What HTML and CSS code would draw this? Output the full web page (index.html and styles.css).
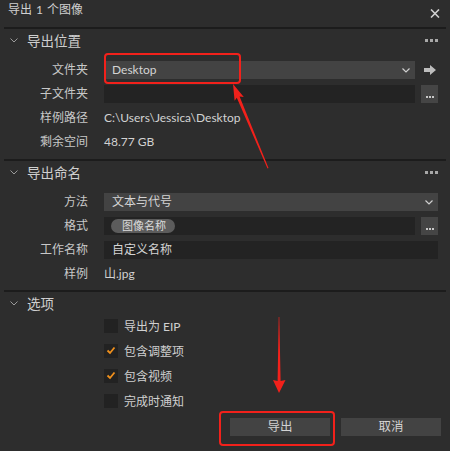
FILE: index.html
```html
<!DOCTYPE html>
<html lang="zh">
<head>
<meta charset="utf-8">
<title>导出 1 个图像</title>
<link rel="stylesheet" href="styles.css">
</head>
<body>
<div class="dialog">
  <div class="titlebar">
    <span class="title">导出 1 个图像</span>
    <svg class="close" width="10" height="9" viewBox="0 0 10 9"><path d="M1 0.5 L9 8.5 M9 0.5 L1 8.5" stroke="#cfcfcf" stroke-width="1.6" fill="none"/></svg>
  </div>
  <div class="sep"></div>

  <section class="section s1">
    <div class="sec-head">
      <svg class="chev" width="8" height="5" viewBox="0 0 8 5"><path d="M0.5 0.5 L4 4 L7.5 0.5" stroke="#9a9a9a" stroke-width="1" fill="none"/></svg>
      <span class="sec-title">导出位置</span>
      <span class="more"><i></i><i></i><i></i></span>
    </div>
    <div class="rows">
      <div class="row">
        <span class="label">文件夹</span>
        <div class="field select">Desktop<svg class="dd" width="8" height="5" viewBox="0 0 8 5"><path d="M0.5 0.5 L4 4 L7.5 0.5" stroke="#cfcfcf" stroke-width="1.2" fill="none"/></svg></div>
        <div class="side">
          <svg width="12" height="10" viewBox="0 0 12 10"><path d="M0 3 H6 V0 L12 5 L6 10 V7 H0 Z" fill="#bdbdbd"/></svg>
        </div>
      </div>
      <div class="row">
        <span class="label">子文件夹</span>
        <div class="field input"></div>
        <div class="side btn"><span class="dots"><i></i><i></i><i></i></span></div>
      </div>
      <div class="row">
        <span class="label">样例路径</span>
        <span class="value">C:\Users\Jessica\Desktop</span>
      </div>
      <div class="row">
        <span class="label">剩余空间</span>
        <span class="value">48.77 GB</span>
      </div>
    </div>
  </section>
  <div class="sep"></div>

  <section class="section s2">
    <div class="sec-head">
      <svg class="chev" width="8" height="5" viewBox="0 0 8 5"><path d="M0.5 0.5 L4 4 L7.5 0.5" stroke="#9a9a9a" stroke-width="1" fill="none"/></svg>
      <span class="sec-title">导出命名</span>
      <span class="more"><i></i><i></i><i></i></span>
    </div>
    <div class="rows">
      <div class="row">
        <span class="label">方法</span>
        <div class="field select">文本与代号<svg class="dd" width="8" height="5" viewBox="0 0 8 5"><path d="M0.5 0.5 L4 4 L7.5 0.5" stroke="#cfcfcf" stroke-width="1.2" fill="none"/></svg></div>
      </div>
      <div class="row">
        <span class="label">格式</span>
        <div class="field input pilled"><span class="pill">图像名称</span></div>
        <div class="side btn"><span class="dots"><i></i><i></i><i></i></span></div>
      </div>
      <div class="row">
        <span class="label">工作名称</span>
        <div class="field input">自定义名称</div>
      </div>
      <div class="row">
        <span class="label">样例</span>
        <span class="value">山.jpg</span>
      </div>
    </div>
  </section>
  <div class="sep"></div>

  <section class="section s3">
    <div class="sec-head">
      <svg class="chev" width="8" height="5" viewBox="0 0 8 5"><path d="M0.5 0.5 L4 4 L7.5 0.5" stroke="#9a9a9a" stroke-width="1" fill="none"/></svg>
      <span class="sec-title">选项</span>
    </div>
    <div class="checks">
      <div class="check"><span class="box"></span><span>导出为 EIP</span></div>
      <div class="check"><span class="box"><svg width="10" height="9" viewBox="0 0 10 9"><path d="M1.5 4.5 L4 7 L8.5 1.5" stroke="#f0901c" stroke-width="1.8" fill="none"/></svg></span><span>包含调整项</span></div>
      <div class="check"><span class="box"><svg width="10" height="9" viewBox="0 0 10 9"><path d="M1.5 4.5 L4 7 L8.5 1.5" stroke="#f0901c" stroke-width="1.8" fill="none"/></svg></span><span>包含视频</span></div>
      <div class="check"><span class="box"></span><span>完成时通知</span></div>
    </div>
    <div class="buttons">
      <button class="button">导出</button>
      <button class="button">取消</button>
    </div>
  </section>

  <div class="mark mark-folder"></div>
  <div class="mark mark-export"></div>
  <svg class="arrows" width="450" height="451" viewBox="0 0 450 451">
    <path d="M268.5 168 L267.5 168.4 L236.8 97.8 L234.6 100.7 L233 84 L243.8 96.9 L239.6 96.6 Z" fill="#f2211b"/>
    <path d="M279.3 317 L278.7 317 L277.6 381 L273 380 L279 393 L285.5 380 L280.6 381 Z" fill="#f2211b"/>
  </svg>
</div>
</body>
</html>
```

FILE: styles.css
```css
* { box-sizing: border-box; }
html, body { margin: 0; padding: 0; }
body {
  background: #2d2d2d;
  font-family: "Lato", "Noto Sans CJK SC", sans-serif;
  font-size: 12px;
  color: #d2d2d2;
}
.dialog {
  position: relative;
  width: 450px;
  height: 451px;
  background: #2d2d2d;
  overflow: hidden;
}
.titlebar {
  height: 27px;
  display: flex;
  justify-content: space-between;
  align-items: flex-start;
  padding: 2px 10px 0 8px;
}
.title { line-height: 16px; font-size: 12px; color: #d0d0d0; word-spacing: 1px; }
.close { margin-top: 7px; }
.sep {
  height: 2px;
  margin: 0 4px;
  background: #1c1c1c;
}
.sec-head {
  height: 24px;
  display: flex;
  align-items: center;
  padding: 0 12px 0 10px;
}
.chev { margin-right: 9px; margin-top: -1px; }
.sec-title { font-size: 13.5px; color: #cfcfcf; flex: 1; line-height: 18px; }
.more { display: flex; gap: 2px; margin-top: -1px; }
.more i { width: 3px; height: 3px; background: #a8a8a8; display: block; }
.rows {
  display: flex;
  flex-direction: column;
  gap: 6px;
  padding: 8px 12px 8px 0;
}
.s2 .rows { padding-bottom: 7px; }
.row {
  display: flex;
  align-items: center;
  height: 18px;
}
.label {
  flex: 0 0 88px;
  text-align: right;
  margin-right: 16px;
  color: #c8c8c8;
  line-height: 18px;
}
.field {
  flex: 1;
  height: 18px;
  line-height: 18px;
  padding: 0 8px;
  display: flex;
  align-items: center;
  color: #d4d4d4;
}
.select { background: #434343; justify-content: space-between; }
.input { background: #232323; }
.dd { margin-right: -3px; }
.side {
  flex: 0 0 17px;
  height: 18px;
  margin-left: 6px;
  display: flex;
  align-items: center;
  justify-content: center;
}
.side.btn { background: #454545; align-items: flex-end; padding-bottom: 5px; }
.dots { display: flex; gap: 1px; }
.dots i { width: 2px; height: 2px; background: #c8c8c8; display: block; }
.value { line-height: 18px; color: #d2d2d2; }
.pilled { padding-left: 7px; }
.pill {
  height: 14px;
  width: 64px;
  border-radius: 7px;
  background: #5c5c5c;
  color: #dcdcdc;
  font-size: 11px;
  line-height: 14px;
  padding-left: 11px;
}
.checks {
  display: flex;
  flex-direction: column;
  gap: 6px;
  padding-left: 104px;
}
.check {
  height: 19px;
  display: flex;
  align-items: center;
  color: #d0d0d0;
}
.box {
  width: 14px;
  height: 14px;
  background: #222222;
  margin-right: 6px;
  display: flex;
  align-items: center;
  justify-content: center;
}
.buttons {
  display: flex;
  justify-content: flex-end;
  gap: 11px;
  padding: 8px 9px 0 0;
}
.button {
  width: 100px;
  height: 18px;
  border: 0;
  padding: 0;
  background: #434343;
  color: #d2d2d2;
  font-family: "Lato", "Noto Sans CJK SC", sans-serif;
  font-size: 12.5px;
  line-height: 18px;
}
.mark {
  position: absolute;
  border: 2.5px solid #f2211b;
  border-radius: 4px;
}
.mark-folder { left: 104px; top: 53px; width: 137px; height: 31px; }
.mark-export { left: 219px; top: 411px; width: 116px; height: 35px; }
.arrows { position: absolute; left: 0; top: 0; pointer-events: none; }
```
